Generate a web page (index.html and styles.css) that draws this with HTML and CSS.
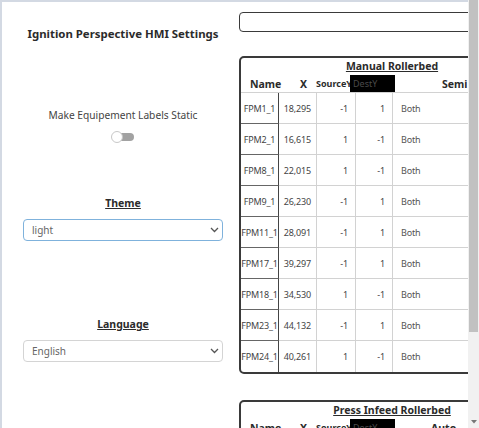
FILE: index.html
```html
<!DOCTYPE html>
<html lang="en">
<head>
<meta charset="utf-8">
<title>Ignition Perspective HMI Settings</title>
<link rel="stylesheet" href="styles.css">
</head>
<body>
<div class="page">
  <div class="left">
    <h1 class="title">Ignition Perspective HMI Settings</h1>
    <div class="label">Make Equipement Labels Static</div>
    <div class="toggle"><span class="knob"></span></div>
    <div class="section-title theme-title">Theme</div>
    <div class="select focused">
      <span>light</span>
      <svg class="chev" width="9" height="6" viewBox="0 0 9 6"><path d="M1 1 L4.5 4.5 L8 1" fill="none" stroke="#555" stroke-width="1.3"/></svg>
    </div>
    <div class="section-title lang-title">Language</div>
    <div class="select">
      <span>English</span>
      <svg class="chev" width="9" height="6" viewBox="0 0 9 6"><path d="M1 1 L4.5 4.5 L8 1" fill="none" stroke="#555" stroke-width="1.3"/></svg>
    </div>
  </div>
  <div class="right">
    <div class="inner">
      <div class="topbox"></div>
      <div class="card">
        <div class="card-title">Manual Rollerbed</div>
        <div class="head">
          <span class="h-name">Name</span>
          <span class="h-x">X</span>
          <span class="h-src">SourceY</span>
          <span class="h-dest">DestY</span>
          <span class="h-semi">Semi</span>
        </div>
        <div class="grid">
          <div class="c-name">FPM1_1</div><div class="c-x">18,295</div><div class="c-num">-1</div><div class="c-num">1</div><div class="c-both">Both</div>
          <div class="c-name">FPM2_1</div><div class="c-x">16,615</div><div class="c-num">1</div><div class="c-num">-1</div><div class="c-both">Both</div>
          <div class="c-name">FPM8_1</div><div class="c-x">22,015</div><div class="c-num">1</div><div class="c-num">-1</div><div class="c-both">Both</div>
          <div class="c-name">FPM9_1</div><div class="c-x">26,230</div><div class="c-num">-1</div><div class="c-num">1</div><div class="c-both">Both</div>
          <div class="c-name">FPM11_1</div><div class="c-x">28,091</div><div class="c-num">-1</div><div class="c-num">1</div><div class="c-both">Both</div>
          <div class="c-name">FPM17_1</div><div class="c-x">39,297</div><div class="c-num">-1</div><div class="c-num">1</div><div class="c-both">Both</div>
          <div class="c-name">FPM18_1</div><div class="c-x">34,530</div><div class="c-num">1</div><div class="c-num">-1</div><div class="c-both">Both</div>
          <div class="c-name">FPM23_1</div><div class="c-x">44,132</div><div class="c-num">-1</div><div class="c-num">1</div><div class="c-both">Both</div>
          <div class="c-name last">FPM24_1</div><div class="c-x last">40,261</div><div class="c-num last">1</div><div class="c-num last">-1</div><div class="c-both last">Both</div>
        </div>
      </div>
      <div class="card card2">
        <div class="card-title">Press Infeed Rollerbed</div>
        <div class="head">
          <span class="h-name">Name</span>
          <span class="h-x">X</span>
          <span class="h-src">SourceY</span>
          <span class="h-dest">DestY</span>
          <span class="h-auto">Auto</span>
        </div>
      </div>
    </div>
  </div>
</div>
<div class="scrollbar">
  <div class="thumb"></div>
  <svg class="arrow" width="6" height="4" viewBox="0 0 6 4"><path d="M0 0 H6 L3 3.5 Z" fill="#777"/></svg>
</div>
</body>
</html>
```
FILE: styles.css
```css
html, body {
  height: 100%;
}
body {
  margin: 0;
  display: flex;
  overflow: hidden;
  font-family: "Noto Sans", "Open Sans", sans-serif;
  color: #333;
  background: #fff;
}
.page {
  flex: 1;
  min-width: 0;
  display: flex;
  overflow: hidden;
  border-top: 2px solid #d3d9e3;
  border-left: 2px solid #d3d9e3;
}
.scrollbar {
  width: 11px;
  flex: none;
  background: #f1f1f1;
  display: flex;
  flex-direction: column;
  align-items: center;
}
.thumb {
  width: 9px;
  height: 332px;
  background: #c1c1c1;
}
.arrow {
  margin-top: auto;
  margin-bottom: 4px;
  display: block;
}
.left {
  width: 237px;
  flex: none;
  padding-left: 5px;
  box-sizing: border-box;
  display: flex;
  flex-direction: column;
  align-items: center;
}
.title {
  margin: 24px 0 0;
  font-size: 11.4px;
  line-height: 16px;
  font-weight: 700;
  color: #2b2b2b;
}
.label {
  margin-top: 66px;
  font-size: 10.2px;
  line-height: 14px;
  color: #444;
}
.toggle {
  margin-top: 11px;
  width: 22px;
  height: 8px;
  border-radius: 4px;
  background: #a2a2a2;
  display: flex;
  align-items: center;
}
.knob {
  width: 10px;
  height: 10px;
  border-radius: 50%;
  background: #fff;
  border: 1px solid #c8c8c8;
  margin-left: -1px;
}
.section-title {
  font-size: 10.5px;
  line-height: 14px;
  font-weight: 700;
  text-decoration: underline;
  color: #2b2b2b;
}
.theme-title {
  margin-top: 55px;
}
.lang-title {
  margin-top: 76px;
}
.select {
  margin-top: 9px;
  width: 200px;
  height: 22px;
  box-sizing: border-box;
  border: 1px solid #d4d4d4;
  border-radius: 4px;
  display: flex;
  align-items: center;
  justify-content: space-between;
  padding: 0 3px 0 8px;
  font-size: 10px;
  color: #666;
}
.select.focused {
  border-color: #7fb2dc;
}
.chev {
  display: block;
}
.right {
  flex: 1;
  min-width: 0;
  overflow: hidden;
}
.inner {
  width: 306px;
}
.topbox {
  margin-top: 10px;
  height: 20px;
  box-sizing: border-box;
  border: 1.5px solid #3a3a3a;
  border-radius: 4px;
}
.card {
  margin-top: 24px;
  border: 2px solid #3a3a3a;
  border-radius: 5px;
  overflow: hidden;
}
.card2 {
  margin-top: 26px;
}
.card-title {
  text-align: center;
  font-size: 10.5px;
  font-weight: 700;
  line-height: 17px;
  text-decoration: underline;
  color: #2b2b2b;
}
.head {
  display: flex;
  align-items: center;
  height: 17px;
  font-weight: 700;
  font-size: 10.5px;
  color: #2b2b2b;
  white-space: nowrap;
}
.h-name {
  margin-left: 9px;
  width: 50px;
  flex: none;
}
.h-x {
  width: 16px;
  flex: none;
}
.h-src {
  font-size: 9px;
  width: 34px;
  flex: none;
}
.h-dest {
  width: 45px;
  flex: none;
  height: 17px;
  line-height: 17px;
  background: #000;
  color: #4a4a4a;
  font-weight: 400;
  font-size: 9px;
  padding-left: 3px;
  box-sizing: border-box;
}
.h-semi {
  margin-left: 47px;
}
.h-auto {
  margin-left: 36px;
}
.grid {
  display: grid;
  grid-template-columns: 38px 38px 39px 37px 1fr;
  grid-auto-rows: 31px;
  border-top: 1px solid #d2d2d2;
  font-size: 9px;
  letter-spacing: -0.15px;
  color: #444;
}
.grid > div {
  display: flex;
  align-items: center;
  border-right: 1px solid #d2d2d2;
  border-bottom: 1px solid #d2d2d2;
  white-space: nowrap;
}
.grid > .c-name {
  justify-content: center;
  border-right-color: #444;
  border-bottom-color: #666;
}
.grid > .c-x {
  justify-content: center;
}
.grid > .c-num {
  justify-content: flex-end;
  padding-right: 7px;
}
.grid > .c-both {
  padding-left: 8px;
  color: #555;
}
.grid > .last {
  border-bottom: none;
}
```
